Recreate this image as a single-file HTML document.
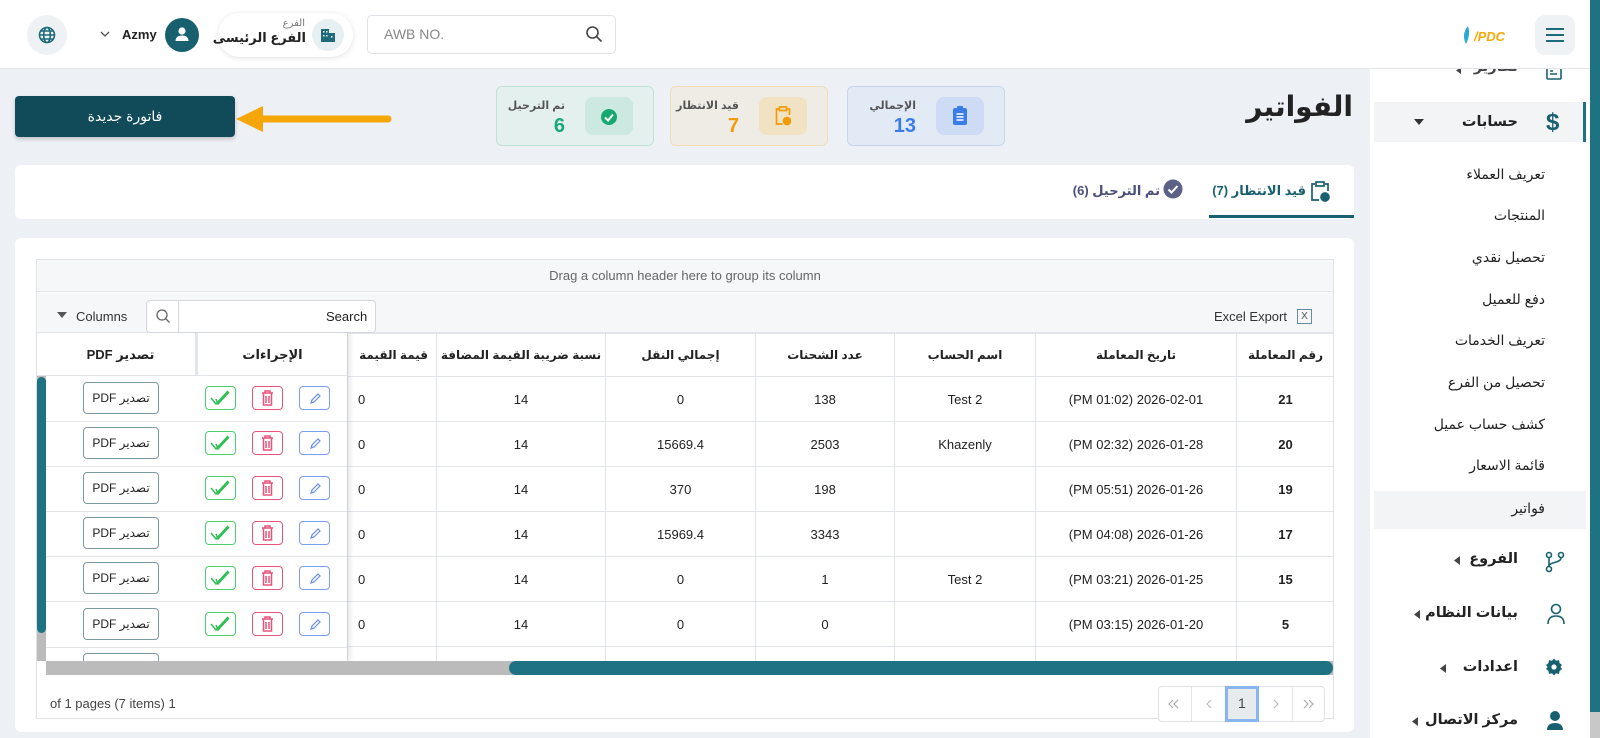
<!DOCTYPE html>
<html><head><meta charset="utf-8">
<style>
*{box-sizing:border-box;margin:0;padding:0}
body{width:1600px;height:738px;overflow:hidden;background:#edf0f5;font-family:"Liberation Sans","DejaVu Sans",sans-serif;color:#222;position:relative}
.a{position:absolute}
.hdr{left:0;top:0;width:1600px;height:69px;background:#fff;border-bottom:1px solid #e3e6eb;z-index:5}
.top{z-index:6}
.side{left:1370px;top:69px;width:220px;height:669px;background:#fff}
.si{position:absolute;right:45px;font-size:14px;color:#222;white-space:nowrap}
.mi{position:absolute;right:72px;font-size:14.5px;font-weight:bold;color:#222;white-space:nowrap}
.card{background:#fff;border-radius:6px}
.stat{position:absolute;top:86px;width:158px;height:60px;border-radius:6px;border:1px solid}
.stat .ic{position:absolute;right:20px;top:10px;width:48px;height:38px;border-radius:8px}
.stat .lb{position:absolute;right:88px;top:12px;font-size:11px;font-weight:bold;color:#555;white-space:nowrap}
.stat .nm{position:absolute;right:88px;top:28px;font-size:20px;font-weight:bold}
table{border-collapse:collapse;table-layout:fixed}
td,th{border:1px solid #e2e5ea;text-align:center;font-size:13px;height:45px;white-space:nowrap;overflow:hidden}
th{height:43px;font-weight:bold;font-size:12px}
.bt{position:absolute;width:31px;height:24px;border:1px solid;border-radius:4px}
.pdf{position:absolute;width:76px;height:32px;border:1px solid #7a9aa0;border-radius:4px;line-height:30px;font-size:12px;text-align:center;white-space:nowrap}
</style></head><body>
<div class="a hdr"></div>
<div class="a top" style="left:1535px;top:15px;width:40px;height:40px;background:#eef2f5;border-radius:10px"></div>
<div class="a top" style="left:1546px;top:28px;width:18px;height:2px;background:#1d6b7d;box-shadow:0 6px 0 #1d6b7d,0 12px 0 #1d6b7d"></div>
<svg class="a top" style="left:1460px;top:24px" width="60" height="22"><path d="M8 2 C3 8 3 14 6 20 C9 14 10 8 8 2Z" fill="#2aa9d0"/><text x="14" y="17" font-size="13" font-weight="bold" font-style="italic" fill="#f5a80c" font-family="Liberation Sans">/PDC</text></svg>
<div class="a top" style="left:27px;top:15px;width:40px;height:40px;background:#eef2f5;border-radius:50%"></div>
<svg class="a top" style="left:38px;top:26px" width="18" height="18" viewBox="0 0 18 18" fill="none" stroke="#1d6b7d" stroke-width="1.6"><circle cx="9" cy="9" r="7.5"/><ellipse cx="9" cy="9" rx="3.3" ry="7.5"/><path d="M1.5 9h15M3 5h12M3 13h12"/></svg>
<svg class="a top" style="left:100px;top:31px" width="10" height="7"><path d="M1 1l4 4 4-4" stroke="#555" fill="none" stroke-width="1.3"/></svg>
<div class="a top" style="left:122px;top:27px;font-size:13px;font-weight:bold">Azmy</div>
<div class="a top" style="left:165px;top:18px;width:34px;height:34px;border-radius:50%;background:#18606f"></div>
<svg class="a top" style="left:173px;top:25px" width="18" height="18"><circle cx="9" cy="6" r="3.6" fill="#fff"/><path d="M2.5 16c0-4 3-5.5 6.5-5.5s6.5 1.5 6.5 5.5z" fill="#fff"/></svg>
<div class="a top" style="left:218px;top:13px;width:135px;height:44px;background:#fff;border-radius:22px;box-shadow:0 1px 6px rgba(0,0,0,.12)"></div>
<div class="a top" style="left:312px;top:19px;width:32px;height:32px;border-radius:50%;background:#e6eff2"></div>
<svg class="a top" style="left:320px;top:27px" width="16" height="16"><rect x="1" y="2" width="8" height="13" fill="#1d6b7d"/><rect x="9" y="6" width="6" height="9" fill="#1d6b7d"/><g fill="#fff"><rect x="3" y="4" width="1.5" height="1.5"/><rect x="6" y="4" width="1.5" height="1.5"/><rect x="3" y="8" width="1.5" height="1.5"/><rect x="6" y="8" width="1.5" height="1.5"/><rect x="11" y="9" width="1.5" height="1.5"/></g></svg>
<div class="a top" style="right:1295px;top:18px;font-size:10px;color:#777;white-space:nowrap">الفرع</div>
<div class="a top" style="right:1294px;top:30px;font-size:13px;font-weight:bold;white-space:nowrap" dir="rtl">الفرع الرئيسى</div>
<div class="a top" style="left:367px;top:15px;width:249px;height:39px;border:1px solid #dfe2e6;border-radius:5px;background:#fff"></div>
<div class="a top" style="left:384px;top:26px;font-size:14px;color:#888">AWB NO.</div>
<svg class="a top" style="left:585px;top:25px" width="18" height="18" fill="none" stroke="#444" stroke-width="1.6"><circle cx="7.5" cy="7.5" r="5.5"/><path d="M11.5 11.5l5 5"/></svg>

<div class="a side"></div>
<div class="a" style="left:1590px;top:0;width:10px;height:712px;background:#1f7282;z-index:7"></div>
<div class="a" style="left:1590px;top:712px;width:10px;height:26px;background:#c8c8c8"></div>
<div class="a" style="left:1370px;top:69px;width:220px;height:669px">
  <div class="mi" style="top:-10px;color:#444" dir="rtl">تقارير</div>
  <svg class="a" style="left:85px;top:-2px" width="8" height="8"><path d="M6 0L6 7 1 3.5z" fill="#444"/></svg>
  <svg class="a" style="left:176px;top:-4px" width="16" height="16" fill="none" stroke="#18606f" stroke-width="1.6"><rect x="1" y="1" width="14" height="13" rx="1"/><path d="M4 9h7M4 6h3"/></svg>
  <div class="a" style="left:4px;top:33px;width:212px;height:40px;background:#f3f4f5;border-right:3px solid #1f7282"></div>
  <div class="mi" style="top:45px" dir="rtl">حسابات</div>
  <svg class="a" style="left:44px;top:49px" width="12" height="8"><path d="M0 1h10L5 7z" fill="#333"/></svg>
  <div class="a" style="left:176px;top:40px;font-size:24px;font-weight:bold;color:#18606f">$</div>
  <div class="si" style="top:97px" dir="rtl">تعريف العملاء</div>
  <div class="si" style="top:138px" dir="rtl">المنتجات</div>
  <div class="si" style="top:180px" dir="rtl">تحصيل نقدي</div>
  <div class="si" style="top:222px" dir="rtl">دفع للعميل</div>
  <div class="si" style="top:263px" dir="rtl">تعريف الخدمات</div>
  <div class="si" style="top:305px" dir="rtl">تحصيل من الفرع</div>
  <div class="si" style="top:347px" dir="rtl">كشف حساب عميل</div>
  <div class="si" style="top:388px" dir="rtl">قائمة الاسعار</div>
  <div class="a" style="left:4px;top:422px;width:212px;height:38px;background:#f3f4f5"></div>
  <div class="si" style="top:431px" dir="rtl">فواتير</div>
  <div class="mi" style="top:482px" dir="rtl">الفروع</div>
  <svg class="a" style="left:84px;top:487px" width="6" height="9"><path d="M6 0v9L0 4.5z" fill="#444"/></svg>
  <svg class="a" style="left:175px;top:482px" width="20" height="22" fill="none" stroke="#18606f" stroke-width="1.6"><circle cx="4" cy="4" r="2.5"/><circle cx="16" cy="4" r="2.5"/><circle cx="4" cy="18" r="2.5"/><path d="M4 6.5v9M16 6.5c0 6-12 4-12 9"/></svg>
  <div class="mi" style="top:536px" dir="rtl">بيانات النظام</div>
  <svg class="a" style="left:44px;top:541px" width="6" height="9"><path d="M6 0v9L0 4.5z" fill="#444"/></svg>
  <svg class="a" style="left:177px;top:534px" width="18" height="22" fill="none" stroke="#18606f" stroke-width="1.6"><circle cx="9" cy="6" r="4.5"/><path d="M1 21c0-6 3.5-8 8-8s8 2 8 8"/></svg>
  <div class="mi" style="top:590px" dir="rtl">اعدادات</div>
  <svg class="a" style="left:70px;top:595px" width="6" height="9"><path d="M6 0v9L0 4.5z" fill="#444"/></svg>
  <svg class="a" style="left:175px;top:589px" width="18" height="18" viewBox="0 0 18 18"><path d="M9 0.5l2 2.2 3-.6.6 3 2.4 1.9-1.6 2 1.6 2-2.4 1.9-.6 3-3-.6-2 2.2-2-2.2-3 .6-.6-3L1 11l1.6-2L1 7l2.4-1.9.6-3 3 .6z" fill="#18606f"/><circle cx="9" cy="9" r="2.6" fill="#fff"/></svg>
  <div class="mi" style="top:643px" dir="rtl">مركز الاتصال</div>
  <svg class="a" style="left:42px;top:648px" width="6" height="9"><path d="M6 0v9L0 4.5z" fill="#444"/></svg>
  <svg class="a" style="left:176px;top:640px" width="18" height="22"><circle cx="9" cy="7" r="5" fill="#18606f"/><path d="M1 21c0-5 3.5-7 8-7s8 2 8 7z" fill="#18606f"/></svg>
</div>

<div class="a" style="right:247px;top:90px;font-size:28px;font-weight:bold;color:#222;white-space:nowrap" dir="rtl">الفواتير</div>
<div class="a" style="left:15px;top:96px;width:220px;height:41px;background:#114b5a;border-radius:4px;color:#fff;font-size:14px;text-align:center;line-height:41px;box-shadow:0 2px 4px rgba(0,0,0,.2)" dir="rtl">فاتورة جديدة</div>
<svg class="a" style="left:236px;top:105px" width="165" height="30"><path d="M25 14H152" stroke="#f5a70a" stroke-width="7" stroke-linecap="round"/><path d="M0 14L27 1V27z" fill="#f5a70a"/></svg>

<div class="stat" style="left:496px;background:#e4f0ee;border-color:#bfe3d8">
  <div class="ic" style="background:#cbe9e0"></div>
  <svg class="a" style="right:35px;top:21px" width="18" height="18"><circle cx="9" cy="9" r="8" fill="#16a870"/><path d="M5 9.5l3 3 5-6" stroke="#fff" stroke-width="2" fill="none"/></svg>
  <div class="lb" dir="rtl">تم الترحيل</div><div class="nm" style="color:#1aa77a">6</div>
</div>
<div class="stat" style="left:670px;background:#efece6;border-color:#f0dcb6">
  <div class="ic" style="background:#f2e2c4"></div>
  <svg class="a" style="right:36px;top:19px" width="16" height="20" fill="none" stroke="#f19a0a" stroke-width="1.7"><path d="M4 3H1.5v15h6M12 3h2.5v6"/><rect x="4.5" y="1" width="7" height="3.5"/><circle cx="12" cy="15" r="3.5" fill="#f19a0a"/></svg>
  <div class="lb" dir="rtl">قيد الانتظار</div><div class="nm" style="color:#f19a0a">7</div>
</div>
<div class="stat" style="left:847px;background:#e2eaf6;border-color:#c6d6f0">
  <div class="ic" style="background:#cddcf4"></div>
  <svg class="a" style="right:37px;top:19px" width="14" height="19"><rect x="0" y="2" width="14" height="17" rx="2" fill="#3b7de8"/><rect x="4" y="0" width="6" height="4" rx="1" fill="#3b7de8"/><path d="M3.5 8h7M3.5 11h7M3.5 14h7" stroke="#fff" stroke-width="1.4"/></svg>
  <div class="lb" dir="rtl">الإجمالي</div><div class="nm" style="color:#3b7de8">13</div>
</div>

<div class="a card" style="left:15px;top:165px;width:1339px;height:54px"></div>
<div class="a" style="left:1209px;top:215px;width:145px;height:3px;background:#18606f"></div>
<div class="a" style="right:294px;top:183px;font-size:13px;font-weight:bold;color:#18606f;white-space:nowrap" dir="rtl">قيد الانتظار (7)</div>
<svg class="a" style="left:1310px;top:180px" width="20" height="22" fill="none" stroke="#18606f" stroke-width="1.7"><path d="M5 4H2v16h7M15 4h3v7"/><rect x="6" y="2" width="8" height="4"/><circle cx="15" cy="17" r="4" fill="#18606f"/></svg>
<div class="a" style="right:440px;top:183px;font-size:13px;font-weight:bold;color:#4a4f7a;white-space:nowrap" dir="rtl">تم الترحيل (6)</div>
<svg class="a" style="left:1163px;top:179px" width="20" height="20"><circle cx="10" cy="10" r="9.5" fill="#5b6285"/><path d="M5.5 10.5l3 3 6-6.5" stroke="#fff" stroke-width="2" fill="none"/></svg>

<div class="a card" style="left:15px;top:238px;width:1339px;height:494px"></div>
<div class="a" style="left:36px;top:259px;width:1298px;height:460px;border:1px solid #dfe2e6;background:#fff"></div>
<div class="a" style="left:37px;top:260px;width:1296px;height:32px;background:#f6f7f9;border-bottom:1px solid #e2e5ea;text-align:center;font-size:13px;line-height:32px;color:#666">Drag a column header here to group its column</div>
<div class="a" style="left:37px;top:293px;width:1296px;height:40px;background:#f6f7f9;border-bottom:1px solid #e2e5ea"></div>
<svg class="a" style="left:57px;top:312px" width="10" height="7"><path d="M0 0h10L5 6z" fill="#555"/></svg>
<div class="a" style="left:76px;top:309px;font-size:13px;color:#333">Columns</div>
<div class="a" style="left:146px;top:300px;width:230px;height:33px;border:1px solid #d3d6da;border-radius:4px;background:#fff"></div>
<div class="a" style="left:178px;top:300px;width:1px;height:33px;background:#d3d6da"></div>
<svg class="a" style="left:155px;top:308px" width="16" height="16" fill="none" stroke="#666" stroke-width="1.3"><circle cx="7" cy="7" r="5"/><path d="M10.5 10.5l4 4"/></svg>
<div class="a" style="left:326px;top:309px;font-size:13px;color:#222">Search</div>
<div class="a" style="left:1214px;top:309px;font-size:13px;color:#333">Excel Export</div>
<div class="a" style="left:1297px;top:309px;width:15px;height:15px;border:1px solid #6a8aa0;font-size:10px;text-align:center;line-height:13px;color:#555">X</div>

<div class="a" style="left:37px;top:333px;width:1296px;height:328px;overflow:hidden">
<table dir="rtl" style="position:absolute;left:9px;top:0;width:1288px">
<colgroup><col style="width:98px"><col style="width:201px"><col style="width:141px"><col style="width:139px"><col style="width:150px"><col style="width:169px"><col style="width:89px"><col style="width:150px"><col style="width:151px"></colgroup>
<tr><th>رقم المعاملة</th><th>تاريخ المعاملة</th><th>اسم الحساب</th><th>عدد الشحنات</th><th>إجمالي النقل</th><th>نسبة ضريبة القيمة المضافة</th><th style="text-align:right;padding-right:8px">قيمة القيمة</th><th></th><th></th></tr>
<tbody>
<tr><td><b>21</b></td><td>2026-02-01 (PM 01:02)</td><td>Test 2</td><td>138</td><td>0</td><td>14</td><td style="text-align:left;padding-left:10px">0</td><td></td><td></td></tr>
<tr><td><b>20</b></td><td>2026-01-28 (PM 02:32)</td><td>Khazenly</td><td>2503</td><td>15669.4</td><td>14</td><td style="text-align:left;padding-left:10px">0</td><td></td><td></td></tr>
<tr><td><b>19</b></td><td>2026-01-26 (PM 05:51)</td><td></td><td>198</td><td>370</td><td>14</td><td style="text-align:left;padding-left:10px">0</td><td></td><td></td></tr>
<tr><td><b>17</b></td><td>2026-01-26 (PM 04:08)</td><td></td><td>3343</td><td>15969.4</td><td>14</td><td style="text-align:left;padding-left:10px">0</td><td></td><td></td></tr>
<tr><td><b>15</b></td><td>2026-01-25 (PM 03:21)</td><td>Test 2</td><td>1</td><td>0</td><td>14</td><td style="text-align:left;padding-left:10px">0</td><td></td><td></td></tr>
<tr><td><b>5</b></td><td>2026-01-20 (PM 03:15)</td><td></td><td>0</td><td>0</td><td>14</td><td style="text-align:left;padding-left:10px">0</td><td></td><td></td></tr>
<tr><td></td><td></td><td></td><td></td><td></td><td></td><td></td><td></td><td></td></tr>
</tbody></table>
<div class="a" style="left:0;top:0;width:310px;height:328px;background:#fff;box-shadow:3px 0 5px rgba(0,0,0,.1)">
  <div class="a" style="left:0;top:0;width:310px;height:43px;border-bottom:1px solid #e2e5ea"></div>
  <div class="a" style="left:158px;top:0;width:3px;height:43px;background:#e2e5ea"></div>
  <div class="a" style="left:9px;top:14px;width:149px;text-align:center;font-size:13px;font-weight:bold" dir="rtl">تصدير PDF</div>
  <div class="a" style="left:161px;top:14px;width:149px;text-align:center;font-size:13px;font-weight:bold" dir="rtl">الإجراءات</div>
  <div id="rows"></div>
</div>
<div class="a" style="left:0;top:43px;width:9px;height:285px;background:#bbb"></div>
<div class="a" style="left:0;top:44px;width:9px;height:256px;background:#1f7282;border-radius:5px"></div>
</div>
<div class="a" style="left:37px;top:661px;width:1296px;height:14px;background:#bbb"></div>
<div class="a" style="left:37px;top:661px;width:9px;height:14px;background:#fff"></div>
<div class="a" style="left:509px;top:661px;width:824px;height:14px;background:#1f7282;border-radius:7px"></div>

<div class="a" style="left:50px;top:696px;font-size:13px;color:#444">of 1 pages (7 items) 1</div>
<div class="a" style="left:1158px;top:686px;width:167px;height:36px;border:1px solid #dfe2e6;border-radius:4px;background:#fff"></div>
<div class="a" style="left:1191px;top:686px;width:1px;height:36px;background:#e2e5ea"></div>
<div class="a" style="left:1225px;top:686px;width:34px;height:36px;background:#e8ebee;border:3px solid #8ab6f0"></div>
<div class="a" style="left:1292px;top:686px;width:1px;height:36px;background:#e2e5ea"></div>
<svg class="a" style="left:1168px;top:699px" width="12" height="10" fill="none" stroke="#aaa" stroke-width="1.2"><path d="M5 1L1 5l4 4M10 1L6 5l4 4"/></svg>
<svg class="a" style="left:1206px;top:699px" width="6" height="10" fill="none" stroke="#bbb" stroke-width="1.2"><path d="M5 1L1 5l4 4"/></svg>
<div class="a" style="left:1238px;top:695px;font-size:14px;color:#444">1</div>
<svg class="a" style="left:1273px;top:699px" width="6" height="10" fill="none" stroke="#bbb" stroke-width="1.2"><path d="M1 1l4 4-4 4"/></svg>
<svg class="a" style="left:1303px;top:699px" width="12" height="10" fill="none" stroke="#aaa" stroke-width="1.2"><path d="M1 1l4 4-4 4M6 1l4 4-4 4"/></svg>

<script>
var h='';
for(var i=0;i<7;i++){
 var t=43+i*45.1;
 h+='<div class="a" style="left:0;top:'+(t+45)+'px;width:310px;height:1px;background:#e2e5ea"></div>';
 h+='<div class="pdf" dir="rtl" style="left:46px;top:'+(t+6)+'px">'+(i<6?'تصدير PDF':'')+'</div>';
 if(i<6){
 h+='<div class="bt" style="border-color:#4ccf6e;left:168px;top:'+(t+10)+'px"><svg width="29" height="22" style="position:absolute;left:0;top:0"><path d="M5 11l5 6 12-13M10 12l2 5 11-12" stroke="#2fbf55" stroke-width="1.5" fill="none"/></svg></div>';
 h+='<div class="bt" style="border-color:#e8537a;left:215px;top:'+(t+10)+'px"><svg width="29" height="22" style="position:absolute;left:0;top:0"><path d="M9 6h11M12 6V4h5v2M10.5 6v12h8V6M13 9v7M16 9v7" stroke="#e8537a" stroke-width="1.5" fill="none"/></svg></div>';
 h+='<div class="bt" style="border-color:#7a9ef0;left:262px;top:'+(t+10)+'px"><svg width="29" height="22" style="position:absolute;left:0;top:0"><path d="M11 16l1-3 6-6 2 2-6 6z" stroke="#6a8ee8" stroke-width="1.2" fill="none"/></svg></div>';
 }
}
document.getElementById('rows').innerHTML=h;
</script>
</body></html>
